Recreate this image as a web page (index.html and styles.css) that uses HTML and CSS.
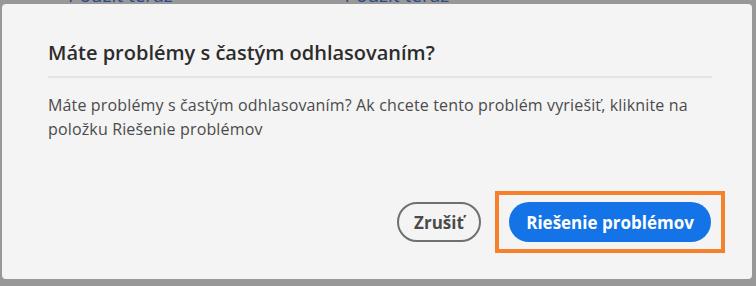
FILE: index.html
```html
<!DOCTYPE html>
<html lang="sk">
<head>
<meta charset="utf-8">
<title>Máte problémy s častým odhlasovaním?</title>
<link rel="stylesheet" href="styles.css">
</head>
<body>
<div class="backdrop">
  <div class="bg-row">
    <span class="bg-link bg-link-1">Použiť teraz</span>
    <span class="bg-link bg-link-2">Použiť teraz</span>
  </div>
</div>
<div class="dialog" role="dialog">
  <h2 class="dialog-title">Máte problémy s častým odhlasovaním?</h2>
  <hr class="divider">
  <p class="dialog-body">Máte problémy s častým odhlasovaním? Ak chcete tento problém vyriešiť, kliknite na položku Riešenie problémov</p>
  <div class="actions">
    <button class="btn btn-secondary">Zrušiť</button>
    <div class="highlight">
      <button class="btn btn-primary">Riešenie problémov</button>
    </div>
  </div>
</div>
</body>
</html>
```
FILE: styles.css
```css
html, body {
  margin: 0;
  padding: 0;
}
body {
  width: 756px;
  height: 286px;
  background: #989898;
  font-family: "Open Sans", "Noto Sans", sans-serif;
  position: relative;
  overflow: hidden;
}
.backdrop {
  height: 286px;
}
.bg-row {
  display: flex;
  margin-top: -16px;
  font-size: 19px;
  line-height: 22px;
}
.bg-link {
  color: #2a4a88;
}
.bg-link-1 { margin-left: 68px; }
.bg-link-2 { margin-left: 172px; }

.dialog {
  position: absolute;
  left: 2px;
  top: 4px;
  width: 750px;
  height: 275px;
  box-sizing: border-box;
  background: #f4f4f4;
  border-radius: 4px;
  padding: 35px 40px 0 46px;
  display: flex;
  flex-direction: column;
}
.dialog-title {
  margin: 0;
  font-size: 20px;
  font-weight: 600;
  line-height: 28px;
  color: #2c2c2c;
}
.divider {
  margin: 9px 0 0 0;
  width: 664px;
  border: none;
  height: 2px;
  background: #e4e4e4;
}
.dialog-body {
  margin: 15px 0 0 0;
  font-size: 16px;
  line-height: 24px;
  letter-spacing: 0.15px;
  color: #4b4b4b;
  width: 662px;
}
.actions {
  margin-top: auto;
  margin-bottom: 26px;
  display: flex;
  justify-content: flex-end;
  align-items: center;
  gap: 14px;
  margin-right: -13px;
}
.highlight {
  border: 4px solid #f5822a;
  padding: 7px 10px;
}
.btn {
  font-family: inherit;
  font-weight: 700;
  font-size: 17px;
  border-radius: 20px;
  height: 40px;
  box-sizing: border-box;
  cursor: pointer;
  display: block;
  padding: 0;
}
.btn-secondary {
  background: transparent;
  border: 2px solid #707070;
  color: #4b4b4b;
  width: 84px;
}
.btn-primary {
  background: #1473e6;
  border: none;
  color: #ffffff;
  width: 202px;
}
```
